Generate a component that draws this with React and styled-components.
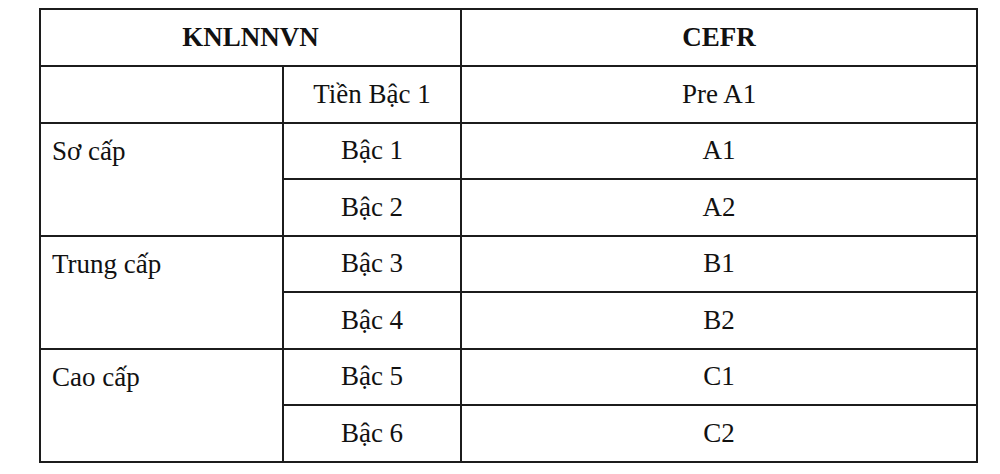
import React from "react";
import styled, { createGlobalStyle } from "styled-components";

const GlobalStyle = createGlobalStyle`
  html, body {
    margin: 0;
    padding: 0;
    background: #ffffff;
  }
  body {
    font-family: "Liberation Serif", "Times New Roman", serif;
    color: #111;
  }
`;

const Page = styled.div`
  padding: 8px 0 0 39px;
`;

const Table = styled.table`
  border-collapse: collapse;
  table-layout: fixed;
  width: 937px;
  font-family: "Liberation Serif", "Times New Roman", serif;
  font-size: 27px;
  line-height: 31px;
  color: #111;
`;

const Col = styled.col`
  width: ${(p) => p.$w}px;
`;

const Row = styled.tr`
  height: ${(p) => p.$h || 56.5}px;
`;

const Head = styled.th`
  border: 2px solid #1c1c1c;
  font-family: "Liberation Serif", "Times New Roman", serif;
  font-weight: bold;
  text-align: center;
  vertical-align: middle;
  padding: 0;
`;

const Cell = styled.td`
  border: 2px solid #1c1c1c;
  font-family: "Liberation Serif", "Times New Roman", serif;
  padding: 0;
  text-align: ${(p) => (p.$left ? "left" : "center")};
  vertical-align: ${(p) => (p.$left ? "top" : "middle")};
  ${(p) => p.$left && "padding: 12px 0 0 11px;"}
`;

const groups = [
  { name: "Sơ cấp", rows: [["Bậc 1", "A1"], ["Bậc 2", "A2"]] },
  { name: "Trung cấp", rows: [["Bậc 3", "B1"], ["Bậc 4", "B2"]] },
  { name: "Cao cấp", rows: [["Bậc 5", "C1"], ["Bậc 6", "C2"]] },
];

export default function App() {
  return (
    <>
      <GlobalStyle />
      <Page>
        <Table>
          <colgroup>
            <Col $w={243} />
            <Col $w={178} />
            <Col $w={516} />
          </colgroup>
          <thead>
            <Row $h={57}>
              <Head colSpan={2}>KNLNNVN</Head>
              <Head>CEFR</Head>
            </Row>
          </thead>
          <tbody>
            <Row>
              <Cell />
              <Cell>Tiền Bậc 1</Cell>
              <Cell>Pre A1</Cell>
            </Row>
            {groups.map((g) =>
              g.rows.map(([level, cefr], i) => (
                <Row key={level}>
                  {i === 0 && (
                    <Cell $left rowSpan={g.rows.length}>
                      {g.name}
                    </Cell>
                  )}
                  <Cell>{level}</Cell>
                  <Cell>{cefr}</Cell>
                </Row>
              ))
            )}
          </tbody>
        </Table>
      </Page>
    </>
  );
}
